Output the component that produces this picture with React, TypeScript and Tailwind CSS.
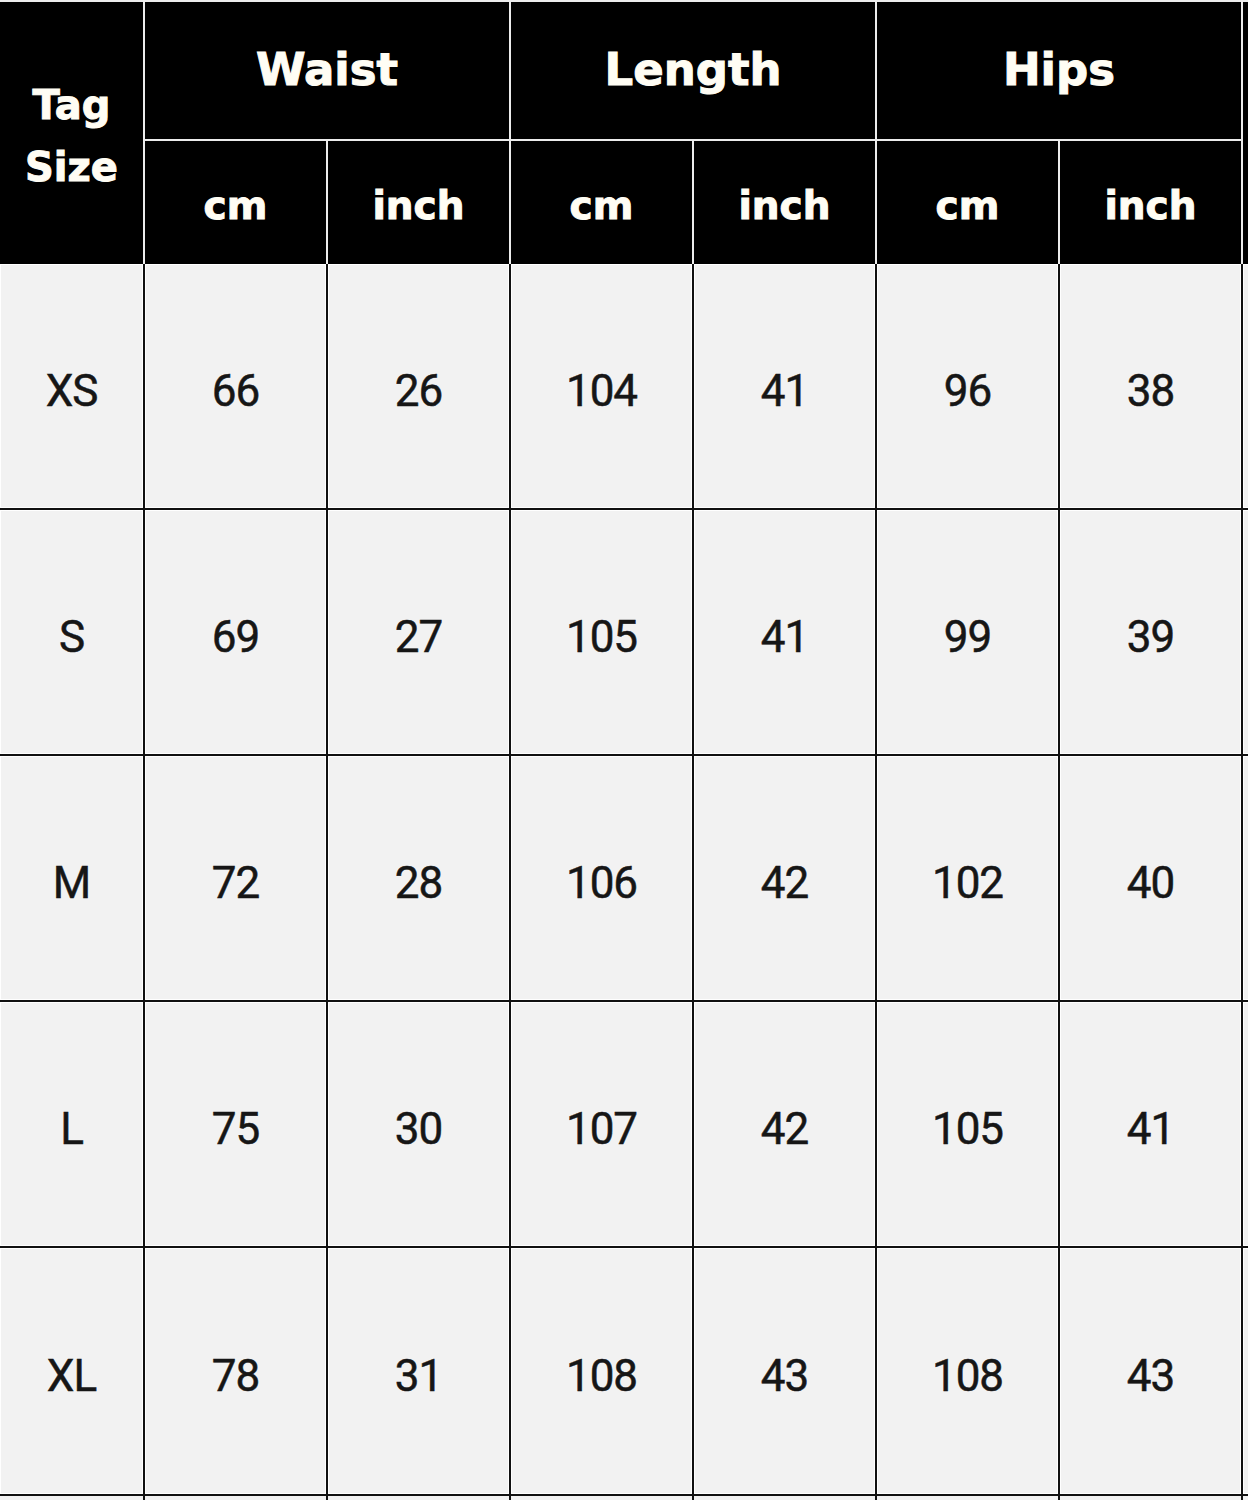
import React from "react";

const rows: string[][] = [
  ["XS", "66", "26", "104", "41", "96", "38"],
  ["S", "69", "27", "105", "41", "99", "39"],
  ["M", "72", "28", "106", "42", "102", "40"],
  ["L", "75", "30", "107", "42", "105", "41"],
  ["XL", "78", "31", "108", "43", "108", "43"],
];

const headFont = { fontFamily: '"DejaVu Sans", Verdana, sans-serif' };
const bodyFont = { fontFamily: 'Roboto, "Noto Sans", sans-serif' };

export default function App() {
  return (
    <div className="w-[1248px] h-[1500px] overflow-hidden bg-[#f2f2f2]">
      {/* Header */}
      <div
        className="grid grid-cols-[143px_repeat(6,181px)_40px] grid-rows-[137px_123px] gap-[2px] pt-[2px] bg-[#ececec] w-[1300px] [-webkit-text-stroke:1px_#fffdf4]"
        style={headFont}
      >
        <div className="row-span-2 bg-black flex flex-col items-center justify-center text-[#fffdf4] font-bold text-[40px] leading-[62px] pt-[6px]">
          <span>Tag</span>
          <span>Size</span>
        </div>
        <div className="col-span-2 bg-black flex items-center justify-center text-[#fffdf4] font-bold text-[45px] pb-[2px]">
          Waist
        </div>
        <div className="col-span-2 bg-black flex items-center justify-center text-[#fffdf4] font-bold text-[45px] pb-[2px]">
          Length
        </div>
        <div className="col-span-2 bg-black flex items-center justify-center text-[#fffdf4] font-bold text-[45px] pb-[2px]">
          Hips
        </div>
        <div className="row-span-2 bg-black" />
        {["cm", "inch", "cm", "inch", "cm", "inch"].map((u, i) => (
          <div
            key={i}
            className="bg-black flex items-center justify-center text-[#fffdf4] font-bold text-[39px] pt-[8px]"
          >
            {u}
          </div>
        ))}
      </div>

      {/* Body */}
      <div
        className="grid grid-cols-[143px_repeat(6,181px)_40px] grid-rows-[244px_244px_244px_244px_246px_20px] gap-[2px] bg-[#111111] w-[1300px]"
        style={bodyFont}
      >
        {rows.map((r, ri) => (
          <React.Fragment key={ri}>
            {r.map((v, ci) => (
              <div
                key={ci}
                className="bg-[#f2f2f2] shadow-[inset_0_0_0_1px_#ffffff] flex items-center justify-center text-[#161616] font-normal text-[44px] tracking-[-1px] pt-[10px] [-webkit-text-stroke:0.5px_#161616]"
              >
                {v}
              </div>
            ))}
            <div className="bg-[#f2f2f2] shadow-[inset_0_0_0_1px_#ffffff]" />
          </React.Fragment>
        ))}
        {Array.from({ length: 8 }).map((_, i) => (
          <div key={"e" + i} className="bg-[#f2f2f2]" />
        ))}
      </div>
    </div>
  );
}
